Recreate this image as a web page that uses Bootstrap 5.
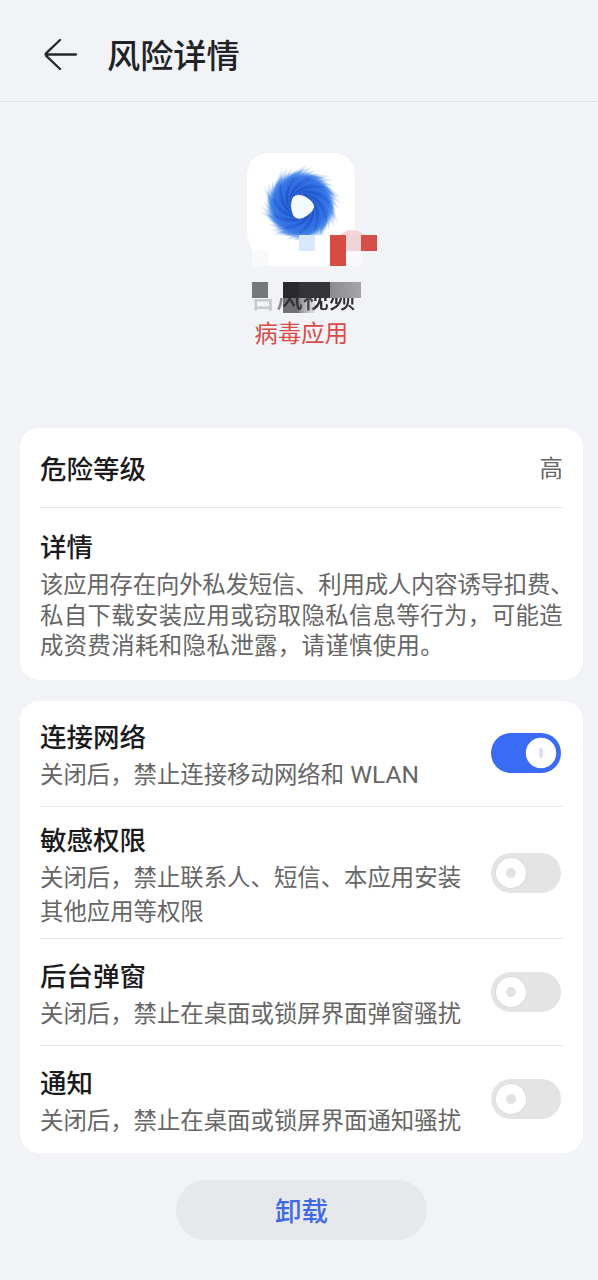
<!DOCTYPE html>
<html lang="zh-CN">
<head>
<meta charset="utf-8">
<meta name="viewport" content="width=device-width, initial-scale=1">
<title>风险详情</title>
<link href="https://cdn.jsdelivr.net/npm/bootstrap@5.3.0/dist/css/bootstrap.min.css" rel="stylesheet">
<style>
body{background:#f1f3f7;font-family:"Noto Sans CJK SC",sans-serif;color:#1c1c1e;font-size:23.4px;overflow-x:hidden}
.topbar{height:102px;border-bottom:1px solid #e0e2e6;padding:7px 0 0 43px}
.topbar svg{margin-top:2px}
.topbar h1{font-size:33.2px;font-weight:500;margin:0 0 0 29px;line-height:48px;color:#202226}
.app-head{height:326px;padding:46px 0 0 242px}
.panel{border:0;border-radius:20px;margin:0 15px 0 20px;padding:0 20px;background:#fff}
.panel-info{height:252px;margin-bottom:21px}
.panel h2{font-size:26.5px;font-weight:500;line-height:40px;margin:0;color:#1b1b1d}
.panel p{margin:0;line-height:34px;color:#666;white-space:nowrap}
.rule{border-bottom:1px solid #e8e8e9}
.level{height:80px;color:#666}
.about{padding-top:18px}
.panel .detail{line-height:30.7px;margin-top:2px}
.tight{letter-spacing:-.2px}
.loose{letter-spacing:.38px}
.latin{font-family:Roboto,sans-serif;font-size:24.5px;line-height:1;margin-left:1px}
.perm{height:107px}
.perm:first-child{height:106px;padding-bottom:2px}
.perm.tall{height:132px}
.perm:last-child{padding-bottom:2px}
.form-switch .form-check-input.toggle{width:70px;height:40px;margin:0 2px 0 0;float:none;border:0;background-color:#e4e4e4;background-size:auto;background-position:4px center;background-image:url("data:image/svg+xml,%3Csvg xmlns='http://www.w3.org/2000/svg' width='32' height='32'%3E%3Ccircle cx='16' cy='16' r='15.8' fill='%23dadada'/%3E%3Ccircle cx='16' cy='16' r='15' fill='%23fff'/%3E%3Ccircle cx='16' cy='16' r='5' fill='%23e2e2e2'/%3E%3C/svg%3E");opacity:1}
.form-switch .form-check-input.toggle:checked{background-color:#3a6bf4;background-position:34px center;background-image:url("data:image/svg+xml,%3Csvg xmlns='http://www.w3.org/2000/svg' width='32' height='32'%3E%3Ccircle cx='16' cy='16' r='15.2' fill='%23fff'/%3E%3Crect x='14.2' y='11' width='3.6' height='10' rx='1.8' fill='%23dcdcf8'/%3E%3C/svg%3E")}
.uninstall{width:251px;height:60px;margin:27px 0 0 176px;background:#e6e8eb;color:#4069e6;font-size:26.5px;font-weight:500;line-height:40px;border:0}
</style>
</head>
<body>
<header class="topbar d-flex align-items-center">
  <svg width="35" height="34" viewBox="0 0 35 34" fill="none" stroke="#26282c" stroke-width="2.3" stroke-linecap="round" stroke-linejoin="round"><path d="M17 2 L3.5 14.8 Q2 16.5 3.5 18.2 L17 31 M2.5 16.5 H33"/></svg>
  <h1>风险详情</h1>
</header>
<main>
  <section class="app-head">
    <svg class="d-block" width="140" height="205" viewBox="242 148 140 205">
      <defs>
        <radialGradient id="disc" gradientUnits="userSpaceOnUse" cx="0" cy="0" r="34">
          <stop offset=".3" stop-color="#2051c6"/><stop offset=".6" stop-color="#2b66de"/><stop offset=".8" stop-color="#3575e3"/><stop offset="1" stop-color="#5e9bee" stop-opacity="0"/>
        </radialGradient>
        <radialGradient id="blade" gradientUnits="userSpaceOnUse" cx="0" cy="0" r="42">
          <stop offset=".4" stop-color="#2a62db"/><stop offset=".72" stop-color="#3a7ce6"/><stop offset="1" stop-color="#9fcbf8" stop-opacity=".2"/>
        </radialGradient>
        <linearGradient id="fade" x1="0" x2="1"><stop stop-color="#8c8c90"/><stop offset="1" stop-color="#a6a6a8"/></linearGradient>
        <linearGradient id="shade" x1="0" x2="1"><stop stop-color="#333" stop-opacity=".7"/><stop offset="1" stop-color="#999" stop-opacity=".25"/></linearGradient>
        <filter id="soft"><feGaussianBlur stdDeviation=".7"/></filter>
        <clipPath id="logoClip"><path d="M242 148H382V235H330V235.5H299V240H242Z"/></clipPath>
        <clipPath id="nameClip"><rect x="250" y="298" width="112" height="15"/></clipPath>
      </defs>
      <path d="M273 153H329C348 153 355 161 355 179V266H268V262H252V248Q247 241 247 228V179C247 161 254 153 273 153Z" fill="#fff"/>
      <rect x="252" y="250" width="16" height="16" fill="#f8f9fb"/>
      <rect x="346" y="250" width="16" height="16" fill="#f9f9fb"/>
      <g clip-path="url(#logoClip)">
        <g transform="translate(301 205)" filter="url(#soft)"><g id="arms"></g><circle r="34" fill="url(#disc)"/><g id="streaks" fill="none"></g></g>
        <path d="M292.500 197Q298 192 306 196.500Q315 202 314.500 207.500Q313 213 303 218.500Q296 221 292.500 215Q288.500 205 292.500 197Z" fill="#f2faff" stroke="#2658c6" stroke-width="1"/>
      </g>
      <rect x="299" y="235" width="16" height="16" fill="#d9e9fa"/>
      <path d="M340 235Q352 225 365 235Z" fill="#f4d4d4"/>
      <rect x="330" y="235" width="16" height="31" fill="#d64c43"/>
      <rect x="346" y="235" width="15" height="16" fill="#eed4d6"/>
      <rect x="361" y="235" width="16" height="16" fill="#d65047"/>
      <g clip-path="url(#nameClip)">
        <text x="250" y="308" font-size="26.3" font-weight="500" fill="#303034" filter="url(#soft)">台风视频</text>
        <rect x="250" y="298" width="26" height="16" fill="#f1f3f7" opacity=".78"/>
        <rect x="276" y="298" width="7" height="16" fill="#f1f3f7" opacity=".45"/>
        <rect x="283" y="298" width="16" height="15" fill="#333336" opacity=".68"/>
        <rect x="299" y="298" width="16" height="15" fill="url(#shade)" opacity=".8"/>
      </g>
      <rect x="252" y="282" width="16" height="16" fill="#76777b"/>
      <rect x="283" y="282" width="16" height="16" fill="#2a2a2c"/>
      <rect x="299" y="282" width="31" height="16" fill="#343437"/>
      <rect x="330" y="282" width="31" height="16" fill="url(#fade)"/>
      <text x="254.500" y="342" font-size="23.4" fill="#d94b46">病毒应用</text>
    </svg>
  </section>
  <section class="card panel panel-info">
    <div class="level rule d-flex justify-content-between align-items-center"><h2>危险等级</h2><span>高</span></div>
    <div class="about">
      <h2>详情</h2>
      <p class="detail"><span class="tight">该应用存在向外私发短信、利用成人内容诱导扣费、</span><br><span class="loose">私自下载安装应用或窃取隐私信息等行为，可能造</span><br><span class="loose">成资费消耗和隐私泄露，请谨慎使用。</span></p>
    </div>
  </section>
  <section class="card panel">
    <div class="perm rule d-flex justify-content-between align-items-center">
      <div><h2>连接网络</h2><p>关闭后，禁止连接移动网络和 <span class="latin">WLAN</span></p></div>
      <div class="form-check form-switch p-0 m-0 d-flex"><input class="form-check-input toggle" type="checkbox" role="switch" aria-label="连接网络" checked></div>
    </div>
    <div class="perm tall rule d-flex justify-content-between align-items-center">
      <div><h2>敏感权限</h2><p>关闭后，禁止联系人、短信、本应用安装<br>其他应用等权限</p></div>
      <div class="form-check form-switch p-0 m-0 d-flex"><input class="form-check-input toggle" type="checkbox" role="switch" aria-label="敏感权限"></div>
    </div>
    <div class="perm rule d-flex justify-content-between align-items-center">
      <div><h2>后台弹窗</h2><p>关闭后，禁止在桌面或锁屏界面弹窗骚扰</p></div>
      <div class="form-check form-switch p-0 m-0 d-flex"><input class="form-check-input toggle" type="checkbox" role="switch" aria-label="后台弹窗"></div>
    </div>
    <div class="perm d-flex justify-content-between align-items-center">
      <div><h2>通知</h2><p>关闭后，禁止在桌面或锁屏界面通知骚扰</p></div>
      <div class="form-check form-switch p-0 m-0 d-flex"><input class="form-check-input toggle" type="checkbox" role="switch" aria-label="通知"></div>
    </div>
  </section>
  <button type="button" class="btn rounded-pill uninstall d-block">卸载</button>
</main>
<script src="https://cdn.jsdelivr.net/npm/bootstrap@5.3.0/dist/js/bootstrap.bundle.min.js"></script>
<script>
// App logo: feathered blades swept clockwise outward, with streaks over the disc
function addPath(parent, attrs) {
  const p = document.createElementNS('http://www.w3.org/2000/svg', 'path');
  for (const k in attrs) p.setAttribute(k, attrs[k]);
  document.getElementById(parent).appendChild(p);
}
const reach = [42, 40, 37, 35, 34, 36];
for (let i = 0; i < 60; i++) {
  addPath('arms', {
    d: `M-26 0C-25 -16 -14 -30 8 ${-reach[i % 6]}C-3 -28 -14 -18 -16 0Z`,
    transform: `rotate(${i * 6})`, fill: 'url(#blade)', opacity: .45
  });
}
for (let i = 0; i < 22; i++) {
  addPath('streaks', {
    d: 'M-11 5C-14 -6 -8 -21 10 -27',
    transform: `rotate(${i * 360 / 22})`,
    stroke: i % 2 ? '#4a8bee' : '#1746b4', 'stroke-width': 1.3, 'stroke-opacity': .35
  });
}
</script>
</body>
</html>
